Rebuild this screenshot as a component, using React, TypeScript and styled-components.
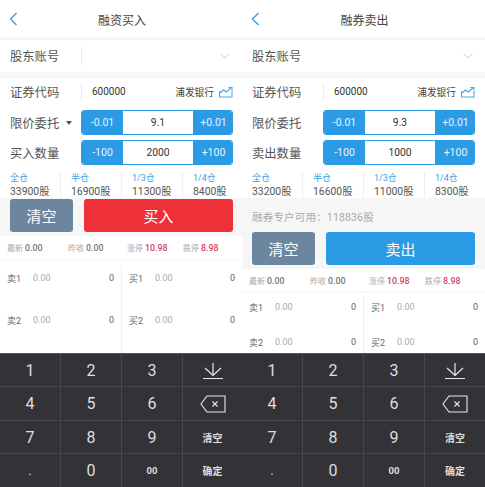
import styled, { createGlobalStyle } from 'styled-components';

const GlobalStyle = createGlobalStyle`
  html, body {
    margin: 0;
    padding: 0;
    background: #fff;
  }
  * {
    box-sizing: border-box;
  }
`;

const fontStack = `Roboto, "Noto Sans CJK SC", "Liberation Sans", sans-serif`;

const Page = styled.div`
  display: flex;
  width: 485px;
  height: 487px;
  overflow: hidden;
  font-family: ${fontStack};
`;
const Panel = styled.div<{ $width: number }>`
  display: flex;
  flex-direction: column;
  width: ${({ $width }) => $width}px;
  height: 487px;
  background: #fff;
`;
const Header = styled.div`
  position: relative;
  display: flex;
  align-items: center;
  justify-content: center;
  height: 37px;
  padding: 1px 0 0 2px;
  font-size: 12px;
  color: #444;
`;
const BackIcon = styled.svg`
  position: absolute;
  left: 9px;
  top: 12px;
  width: 9px;
  height: 14px;
`;
const AccountRow = styled.div`
  display: flex;
  align-items: center;
  height: 42px;
  padding: 0 10px;
  border-top: 3px solid #f6f6f6;
  border-bottom: 7px solid #f7f7f7;
`;
const Label = styled.div`
  width: 71px;
  flex-shrink: 0;
  font-size: 12.3px;
  color: #555;
  display: flex;
  align-items: center;
  gap: 7px;
`;
const Caret = styled.span`
  width: 0;
  height: 0;
  border-left: 3.5px solid transparent;
  border-right: 3.5px solid transparent;
  border-top: 4px solid #555;
`;
const VDivider = styled.div`
  width: 1px;
  height: 18px;
  background: #ebebeb;
`;
const ChevronDown = styled.svg`
  margin-left: auto;
  margin-right: 2px;
  width: 10px;
  height: 6px;
`;
const CodeRow = styled.div`
  display: flex;
  align-items: center;
  width: 233px;
  height: 25px;
  padding-left: 10px;
`;
const CodeValue = styled.div`
  margin-left: 10px;
  font-size: 10px;
  color: #333;
`;
const StockName = styled.div`
  margin-left: auto;
  font-size: 9.7px;
  color: #444;
`;
const ChartIcon = styled.svg`
  margin-left: 5px;
  width: 14px;
  height: 12px;
`;
const StepperRow = styled.div<{ $top: number }>`
  display: flex;
  align-items: center;
  margin-top: ${({ $top }) => $top}px;
  padding-left: 10px;
  height: 25px;
`;
const Stepper = styled.div`
  display: grid;
  grid-template-columns: 41px 70px 41px;
  width: 152px;
  flex-shrink: 0;
  height: 25px;
  border: 1px solid #2b9be6;
  border-radius: 3px;
  overflow: hidden;
`;
const StepButton = styled.div`
  display: flex;
  align-items: center;
  justify-content: center;
  background: #2b9be6;
  color: #e6f4fd;
  font-size: 10.5px;
`;
const StepValue = styled.div`
  display: flex;
  align-items: center;
  justify-content: center;
  color: #333;
  font-size: 10.3px;
`;
const RatioRow = styled.div`
  display: grid;
  grid-template-columns: 50px 61px 61px 61px;
  margin: 7px 0 0 10px;
  height: 26px;
`;
const RatioCell = styled.div<{ $line: boolean }>`
  display: flex;
  flex-direction: column;
  padding-left: ${({ $line }) => ($line ? 10 : 0)}px;
  border-left: ${({ $line }) => ($line ? '1px solid #eee' : 'none')};
  line-height: 13px;
`;
const RatioName = styled.span`
  font-size: 9px;
  color: #3d9fdf;
`;
const RatioAmount = styled.span`
  font-size: 10.4px;
  color: #555;
  white-space: nowrap;
`;
const ActionArea = styled.div`
  display: flex;
  flex-direction: column;
  background: #f6f6f6;
  padding: 1px 0 4px 10px;
`;
const Available = styled.div`
  height: 33px;
  display: flex;
  align-items: center;
  padding-top: 2px;
  font-size: 10.6px;
  letter-spacing: 0.1px;
  color: #aaa;
`;
const Actions = styled.div`
  display: flex;
  width: 223px;
  gap: 11px;
`;
const ClearButton = styled.div`
  display: flex;
  align-items: center;
  justify-content: center;
  width: 63px;
  height: 33px;
  border-radius: 3px;
  background: #6c86a0;
  color: #fff;
  font-size: 15px;
`;
const SubmitButton = styled.div<{ $color: string }>`
  display: flex;
  align-items: center;
  justify-content: center;
  flex: 1;
  height: 33px;
  border-radius: 3px;
  background: ${({ $color }) => $color};
  color: #fff;
  font-size: 15px;
`;
const QuoteRow = styled.div`
  display: grid;
  grid-template-columns: 61px 59px 56px 1fr;
  align-items: center;
  height: 24px;
  padding-left: 7px;
  font-size: 8px;
  color: #aaa;
  border-bottom: 1px solid #f6f6f6;
`;
const QuoteValue = styled.span<{ $red?: boolean }>`
  margin-left: 2px;
  font-size: 8.8px;
  font-weight: 500;
  color: ${({ $red }) => ($red ? '#d8405f' : '#777')};
`;
const Book = styled.div<{ $top: number }>`
  display: grid;
  grid-template-columns: 121px 1fr;
  flex: 1;
  min-height: 0;
  margin-top: ${({ $top }) => $top}px;
`;
const BookSide = styled.div<{ $line: boolean; $gap: number }>`
  display: flex;
  flex-direction: column;
  gap: ${({ $gap }) => $gap}px;
  padding: 5px 7px 0;
  border-left: ${({ $line }) => ($line ? '1px solid #eee' : 'none')};
`;
const BookRow = styled.div`
  display: flex;
  align-items: center;
  height: 14px;
  font-size: 9px;
  color: #666;
`;
const BookLabel = styled.span`
  width: 26px;
`;
const BookPrice = styled.span`
  color: #aaa;
`;
const BookSize = styled.span`
  margin-left: auto;
`;
const Keyboard = styled.div`
  display: grid;
  grid-template-columns: repeat(3, 61px) 1fr;
  grid-template-rows: repeat(4, 1fr);
  height: 134px;
  flex-shrink: 0;
  background: #333337;
  border-top: 1px solid #55555a;
`;
const Key = styled.div<{ $size: number; $bold?: boolean }>`
  display: flex;
  align-items: center;
  justify-content: center;
  padding-top: 1px;
  font-size: ${({ $size }) => $size}px;
  font-weight: ${({ $bold }) => ($bold ? 700 : 400)};
  color: #dedee0;
  border-right: 1px solid #47474b;
  border-bottom: 1px solid #47474b;

  &:nth-child(4n) {
    border-right: none;
  }
  &:nth-last-child(-n + 4) {
    border-bottom: none;
  }
`;

function HideKeyIcon() {
  return (
    <svg width="22" height="18" viewBox="0 0 22 18" fill="none" stroke="#e8e8e8" strokeWidth="1.2">
      <path d="M11 1v12M3 6l8 7.500L19 6M1 16.500h20" />
    </svg>
  );
}

function BackspaceIcon() {
  return (
    <svg width="26" height="18" viewBox="0 0 26 18" fill="none" stroke="#e8e8e8" strokeWidth="1.1">
      <path d="M7 1h18v16H7L1 9z" />
      <path d="M12.500 6.500l5 5M17.500 6.500l-5 5" />
    </svg>
  );
}

interface TradePanelProps {
  width: number;
  title: string;
  caret?: boolean;
  lineInAccount?: boolean;
  price: string;
  amountLabel: string;
  amount: string;
  ratios: string[];
  available?: boolean;
  submitLabel: string;
  submitColor: string;
}

const ratioNames = ['全仓', '半仓', '1/3仓', '1/4仓'];
const keys: { text?: string; size: number; bold?: boolean; icon?: 'hide' | 'back' }[] = [
  { text: '1', size: 16 },
  { text: '2', size: 16 },
  { text: '3', size: 16 },
  { icon: 'hide', size: 16 },
  { text: '4', size: 16 },
  { text: '5', size: 16 },
  { text: '6', size: 16 },
  { icon: 'back', size: 16 },
  { text: '7', size: 16 },
  { text: '8', size: 16 },
  { text: '9', size: 16 },
  { text: '清空', size: 10, bold: true },
  { text: '.', size: 13 },
  { text: '0', size: 16 },
  { text: '00', size: 9.5, bold: true },
  { text: '确定', size: 10, bold: true },
];

function TradePanel(props: TradePanelProps) {
  return (
    <Panel $width={props.width}>
      <Header>
        <BackIcon viewBox="0 0 9 14" fill="none" stroke="#3b9ee0" strokeWidth="1.4">
          <path d="M7.500 1L1.500 7l6 6" />
        </BackIcon>
        {props.title}
      </Header>
      <AccountRow>
        <Label>股东账号</Label>
        {props.lineInAccount && <VDivider />}
        <ChevronDown viewBox="0 0 10 6" fill="none" stroke="#ccc" strokeWidth="1">
          <path d="M.5.500L5 5 9.500.5" />
        </ChevronDown>
      </AccountRow>
      <CodeRow>
        <Label>证券代码</Label>
        <VDivider />
        <CodeValue>600000</CodeValue>
        <StockName>浦发银行</StockName>
        <ChartIcon viewBox="0 0 14 12" fill="none" stroke="#4aa5e4" strokeWidth="1.1">
          <path d="M.5 5v6h12.500V5" />
          <path d="M1 7l3.500-3 3 2L12 2" />
          <path d="M9.500 1.500H13V4.500" />
        </ChartIcon>
      </CodeRow>
      <StepperRow $top={6}>
        <Label>
          限价委托
          {props.caret && <Caret />}
        </Label>
        <Stepper>
          <StepButton>-0.01</StepButton>
          <StepValue>{props.price}</StepValue>
          <StepButton>+0.01</StepButton>
        </Stepper>
      </StepperRow>
      <StepperRow $top={5}>
        <Label>{props.amountLabel}</Label>
        <Stepper>
          <StepButton>-100</StepButton>
          <StepValue>{props.amount}</StepValue>
          <StepButton>+100</StepButton>
        </Stepper>
      </StepperRow>
      <RatioRow>
        {ratioNames.map((name, i) => (
          <RatioCell key={name} $line={i > 0}>
            <RatioName>{name}</RatioName>
            <RatioAmount>{props.ratios[i]}股</RatioAmount>
          </RatioCell>
        ))}
      </RatioRow>
      <ActionArea>
        {props.available && <Available>融券专户可用：118836股</Available>}
        <Actions>
          <ClearButton>清空</ClearButton>
          <SubmitButton $color={props.submitColor}>{props.submitLabel}</SubmitButton>
        </Actions>
      </ActionArea>
      <QuoteRow>
        <span>
          最新<QuoteValue>0.00</QuoteValue>
        </span>
        <span>
          昨收<QuoteValue>0.00</QuoteValue>
        </span>
        <span>
          涨停<QuoteValue $red>10.98</QuoteValue>
        </span>
        <span>
          跌停<QuoteValue $red>8.98</QuoteValue>
        </span>
      </QuoteRow>
      <Book $top={props.available ? 2 : 6}>
        {['卖', '买'].map((side, i) => (
          <BookSide key={side} $line={i === 1} $gap={props.available ? 21 : 28}>
            {[1, 2].map((level) => (
              <BookRow key={level}>
                <BookLabel>
                  {side}
                  {level}
                </BookLabel>
                <BookPrice>0.00</BookPrice>
                <BookSize>0</BookSize>
              </BookRow>
            ))}
          </BookSide>
        ))}
      </Book>
      <Keyboard>
        {keys.map((key, i) => (
          <Key key={i} $size={key.size} $bold={key.bold}>
            {key.icon === 'hide' && <HideKeyIcon />}
            {key.icon === 'back' && <BackspaceIcon />}
            {key.text}
          </Key>
        ))}
      </Keyboard>
    </Panel>
  );
}

export default function App() {
  return (
    <Page>
      <GlobalStyle />
      <TradePanel
        width={242}
        title="融资买入"
        caret
        lineInAccount
        price="9.1"
        amountLabel="买入数量"
        amount="2000"
        ratios={['33900', '16900', '11300', '8400']}
        submitLabel="买入"
        submitColor="#ee3039"
      />
      <TradePanel
        width={243}
        title="融券卖出"
        price="9.3"
        amountLabel="卖出数量"
        amount="1000"
        ratios={['33200', '16600', '11000', '8300']}
        available
        submitLabel="卖出"
        submitColor="#2b9be6"
      />
    </Page>
  );
}
